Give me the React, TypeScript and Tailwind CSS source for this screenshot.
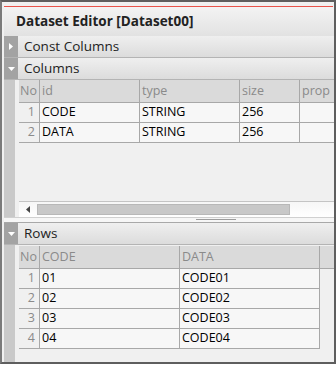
import React from "react";

const font = { fontFamily: '"Segoe UI", "Open Sans", "Noto Sans", sans-serif' };

function SectionHeader({ title, open }: { title: string; open: boolean }) {
  return (
    <div className="flex h-[22px] border-b border-[#b4b4b4] bg-gradient-to-b from-[#efefef] to-[#dcdcdc]">
      <div className="flex w-[14px] items-center justify-center bg-[#a3a3a3]">
        {open ? (
          <svg width="7" height="4" viewBox="0 0 7 4">
            <path d="M0 0 L7 0 L3.5 4 Z" fill="#ffffff" />
          </svg>
        ) : (
          <svg width="4" height="7" viewBox="0 0 4 7">
            <path d="M0 0 L4 3.5 L0 7 Z" fill="#ffffff" />
          </svg>
        )}
      </div>
      <div className="flex items-center pl-[6px] text-[13.5px] text-[#222]">{title}</div>
    </div>
  );
}

type Col = { name: string; w: number };

function Grid({ cols, rows, filler }: { cols: Col[]; rows: string[][]; filler?: boolean }) {
  const dataW = cols.reduce((a, c) => a + c.w, 0);
  return (
    <div className="flex flex-col">
      <div className="flex h-[23px] bg-[#dadada] border-b border-[#a8a8a8]">
        <div className="flex w-[21px] shrink-0 items-center justify-end pr-[2px] border-r border-[#a8a8a8] text-[12.5px] text-[#8a8a8a]">
          No
        </div>
        {cols.map((c) => (
          <div
            key={c.name}
            style={{ width: c.w }}
            className="flex shrink-0 items-center pl-[2px] border-r border-[#a8a8a8] text-[12.5px] text-[#8a8a8a]"
          >
            {c.name}
          </div>
        ))}
        {filler && <div className="w-[14px] shrink-0" />}
      </div>
      {rows.map((r, i) => (
        <div key={i} className="flex h-[20px]" style={{ width: 21 + dataW }}>
          <div className="flex w-[21px] shrink-0 items-center justify-end pr-[4px] border-r border-b border-[#a8a8a8] bg-[#f0f0f0] text-[12.5px] text-[#8a8a8a]">
            {i + 1}
          </div>
          {cols.map((c, j) => (
            <div
              key={j}
              style={{ width: c.w }}
              className="flex shrink-0 items-center pl-[2px] border-r border-b border-[#a8a8a8] bg-[#f7f7f7] text-[12.5px] text-black"
            >
              {r[j]}
            </div>
          ))}
        </div>
      ))}
    </div>
  );
}

export default function App() {
  return (
    <div style={font} className="w-[336px] h-[365px] overflow-hidden bg-white">
      <div className="flex h-[364px] w-[336px] flex-col border-2 border-[#5e5e5e] border-l-[#7a7a7a] bg-[#f0f0f0] pl-[2px] pt-[4px]">
        <div className="h-[1px] bg-[#e8534a] mr-[1px]" />
        <div className="flex h-[29px] items-center bg-gradient-to-b from-[#f3f3f3] to-[#e2e2e2] pl-[12px] text-[13.5px] font-bold text-[#222]">
          Dataset Editor [Dataset00]
        </div>
        <SectionHeader title="Const Columns" open={false} />
        <SectionHeader title="Columns" open={true} />
        <div className="flex h-[137px]">
          <div className="w-[11px] shrink-0 bg-[#c9c9c9]" />
          <div className="w-[4px] shrink-0" />
          <div className="flex min-w-0 flex-1 flex-col overflow-hidden">
            <div className="h-[121px] overflow-hidden">
              <Grid
                cols={[
                  { name: "id", w: 100 },
                  { name: "type", w: 100 },
                  { name: "size", w: 60 },
                  { name: "prop", w: 60 },
                ]}
                rows={[
                  ["CODE", "STRING", "256", ""],
                  ["DATA", "STRING", "256", ""],
                ]}
              />
            </div>
            <div className="flex h-[16px] items-center border-t border-[#c4c4c4] bg-gradient-to-b from-[#f6f6f6] to-[#ffffff]">
              <div className="flex w-[18px] items-center justify-center">
                <svg width="4" height="7" viewBox="0 0 4 7">
                  <path d="M4 0 L0 3.5 L4 7 Z" fill="#444" />
                </svg>
              </div>
              <div className="h-[11px] w-[253px] border border-[#b8b8b8] bg-[#c8c8c8]" />
            </div>
          </div>
        </div>
        <div className="flex h-[5px] flex-col border-t border-[#d0d0d0] bg-[#f6f6f6]">
          <div className="mt-[1px] ml-[192px] h-[1px] w-[40px] bg-[#9c9c9c]" />
        </div>
        <div className="h-[1px] bg-[#a8a8a8]" />
        <SectionHeader title="Rows" open={true} />
        <div className="flex flex-1">
          <div className="w-[11px] shrink-0 bg-[#c9c9c9]" />
          <div className="w-[4px] shrink-0" />
          <div className="min-w-0 flex-1 overflow-hidden pt-[1px]">
            <Grid
              cols={[
                { name: "CODE", w: 140 },
                { name: "DATA", w: 140 },
              ]}
              rows={[
                ["01", "CODE01"],
                ["02", "CODE02"],
                ["03", "CODE03"],
                ["04", "CODE04"],
              ]}
              filler
            />
          </div>
        </div>
      </div>
    </div>
  );
}
